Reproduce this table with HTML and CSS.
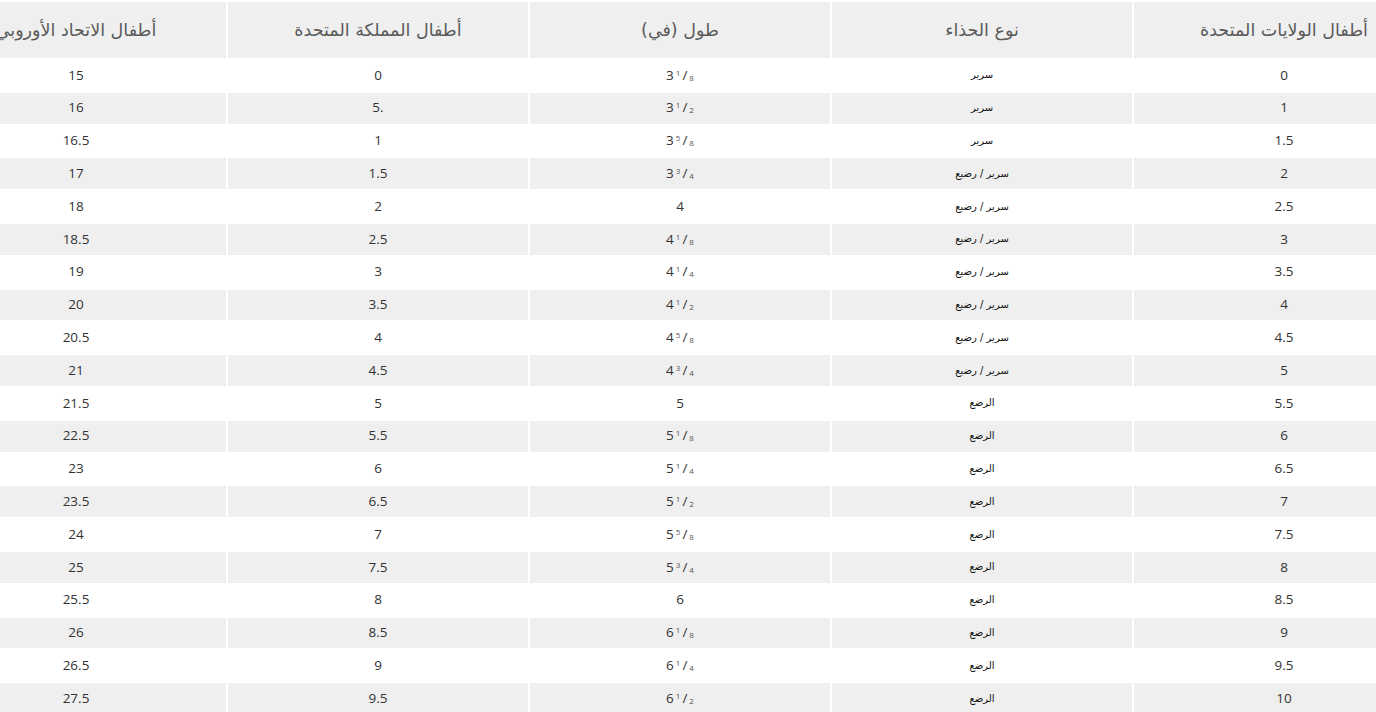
FILE: index.html
```html
<!DOCTYPE html>
<html lang="ar">
<head>
<meta charset="utf-8">
<link rel="stylesheet" href="styles.css">
</head>
<body>
<table class="sizes" dir="rtl">
  <thead>
    <tr>
      <th>أطفال الولايات المتحدة</th>
      <th>نوع الحذاء</th>
      <th>طول (في)</th>
      <th>أطفال المملكة المتحدة</th>
      <th>أطفال الاتحاد الأوروبي</th>
    </tr>
  </thead>
  <tbody>
    <tr><td>0</td><td class="type">سرير</td><td><span class="len" dir="ltr">3<sup>1</sup>/<sub>8</sub></span></td><td>0</td><td>15</td></tr>
    <tr><td>1</td><td class="type">سرير</td><td><span class="len" dir="ltr">3<sup>1</sup>/<sub>2</sub></span></td><td><span dir="ltr">5.</span></td><td>16</td></tr>
    <tr><td>1.5</td><td class="type">سرير</td><td><span class="len" dir="ltr">3<sup>5</sup>/<sub>8</sub></span></td><td>1</td><td>16.5</td></tr>
    <tr><td>2</td><td class="type">سرير / رضيع</td><td><span class="len" dir="ltr">3<sup>3</sup>/<sub>4</sub></span></td><td>1.5</td><td>17</td></tr>
    <tr><td>2.5</td><td class="type">سرير / رضيع</td><td><span class="len" dir="ltr">4</span></td><td>2</td><td>18</td></tr>
    <tr><td>3</td><td class="type">سرير / رضيع</td><td><span class="len" dir="ltr">4<sup>1</sup>/<sub>8</sub></span></td><td>2.5</td><td>18.5</td></tr>
    <tr><td>3.5</td><td class="type">سرير / رضيع</td><td><span class="len" dir="ltr">4<sup>1</sup>/<sub>4</sub></span></td><td>3</td><td>19</td></tr>
    <tr><td>4</td><td class="type">سرير / رضيع</td><td><span class="len" dir="ltr">4<sup>1</sup>/<sub>2</sub></span></td><td>3.5</td><td>20</td></tr>
    <tr><td>4.5</td><td class="type">سرير / رضيع</td><td><span class="len" dir="ltr">4<sup>5</sup>/<sub>8</sub></span></td><td>4</td><td>20.5</td></tr>
    <tr><td>5</td><td class="type">سرير / رضيع</td><td><span class="len" dir="ltr">4<sup>3</sup>/<sub>4</sub></span></td><td>4.5</td><td>21</td></tr>
    <tr><td>5.5</td><td class="type">الرضع</td><td><span class="len" dir="ltr">5</span></td><td>5</td><td>21.5</td></tr>
    <tr><td>6</td><td class="type">الرضع</td><td><span class="len" dir="ltr">5<sup>1</sup>/<sub>8</sub></span></td><td>5.5</td><td>22.5</td></tr>
    <tr><td>6.5</td><td class="type">الرضع</td><td><span class="len" dir="ltr">5<sup>1</sup>/<sub>4</sub></span></td><td>6</td><td>23</td></tr>
    <tr><td>7</td><td class="type">الرضع</td><td><span class="len" dir="ltr">5<sup>1</sup>/<sub>2</sub></span></td><td>6.5</td><td>23.5</td></tr>
    <tr><td>7.5</td><td class="type">الرضع</td><td><span class="len" dir="ltr">5<sup>5</sup>/<sub>8</sub></span></td><td>7</td><td>24</td></tr>
    <tr><td>8</td><td class="type">الرضع</td><td><span class="len" dir="ltr">5<sup>3</sup>/<sub>4</sub></span></td><td>7.5</td><td>25</td></tr>
    <tr><td>8.5</td><td class="type">الرضع</td><td><span class="len" dir="ltr">6</span></td><td>8</td><td>25.5</td></tr>
    <tr><td>9</td><td class="type">الرضع</td><td><span class="len" dir="ltr">6<sup>1</sup>/<sub>8</sub></span></td><td>8.5</td><td>26</td></tr>
    <tr><td>9.5</td><td class="type">الرضع</td><td><span class="len" dir="ltr">6<sup>1</sup>/<sub>4</sub></span></td><td>9</td><td>26.5</td></tr>
    <tr><td>10</td><td class="type">الرضع</td><td><span class="len" dir="ltr">6<sup>1</sup>/<sub>2</sub></span></td><td>9.5</td><td>27.5</td></tr>
  </tbody>
</table>
</body>
</html>
```
FILE: styles.css
```css
html, body {
  margin: 0;
  padding: 0;
  overflow: hidden;
  background: #ffffff;
}

.sizes {
  margin-left: -76px;
  border-collapse: separate;
  border-spacing: 2px;
  table-layout: fixed;
  width: 1512px;
  font-family: "Open Sans", "Liberation Sans", sans-serif;
  color: #333333;
}

.sizes th {
  width: 300px;
  height: 56px;
  padding: 0;
  background: #efefef;
  font-family: "DejaVu Sans", "Liberation Sans", sans-serif;
  font-weight: normal;
  font-size: 17.5px;
  color: #5a5a5a;
  text-align: center;
  vertical-align: middle;
}

.sizes td {
  height: 30.8px;
  padding: 0;
  font-size: 13.5px;
  text-align: center;
  vertical-align: middle;
  line-height: 1;
}

.sizes tbody tr:nth-child(even) td {
  background: #efefef;
}

.sizes td.type {
  font-family: "DejaVu Sans", "Liberation Sans", sans-serif;
  font-size: 10px;
  color: #111111;
}

.len {
  display: inline-block;
  white-space: nowrap;
}

.len sup,
.len sub {
  font-size: 8px;
  line-height: 0;
  color: #555555;
}

.len sup {
  vertical-align: 4px;
  margin: 0 2px 0 2px;
}

.len sub {
  vertical-align: -1px;
  margin-left: 2px;
}
```
